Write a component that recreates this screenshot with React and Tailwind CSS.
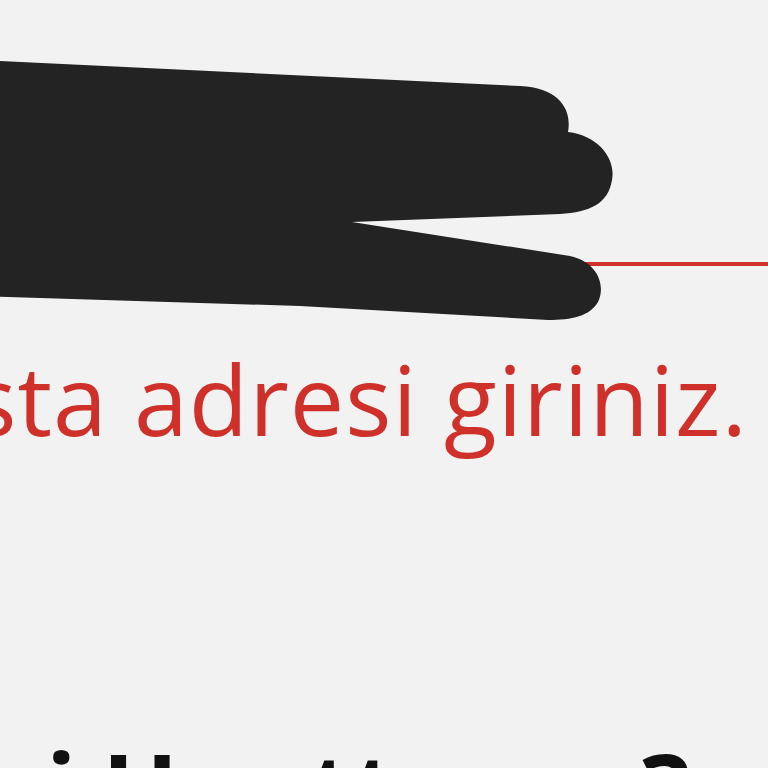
import React from "react";

function Scribble() {
  return (
    <svg
      className="absolute left-0 top-0"
      width="640"
      height="340"
      viewBox="0 0 640 340"
    >
      <path
        d="M-20 60 L520 86 C560 88 572 110 568 132 C600 136 616 160 612 180 C608 204 590 212 560 214 L352 222 L570 256 C598 262 606 286 598 302 C590 316 572 320 548 320 L300 306 L-20 296 Z"
        fill="#232323"
      />
    </svg>
  );
}

export default function App() {
  return (
    <div
      className="w-full h-[768px] bg-[#f2f2f2] overflow-hidden flex flex-col"
      style={{ fontFamily: "'Open Sans', 'Noto Sans', sans-serif" }}
    >
      <div className="relative h-[266px] shrink-0 border-b-4 border-[#d0302a]">
        <input
          type="email"
          defaultValue=""
          className="w-full h-full bg-transparent outline-none text-[90px] text-[#232323]"
        />
        <Scribble />
      </div>

      <div className="flex justify-end pr-[20px] mt-[72px] whitespace-nowrap">
        <p className="text-[#d0302a] text-[97px] tracking-[0.01em] leading-[120px]">
          Lütfen geçerli bir e-posta adresi giriniz.
        </p>
      </div>

      <div className="flex justify-end pr-[78px] mt-[270px] whitespace-nowrap">
        <p className="text-[#111] font-bold text-[100px] leading-[120px]">
          Şifrenizi Unuttunuz?
        </p>
      </div>
    </div>
  );
}
